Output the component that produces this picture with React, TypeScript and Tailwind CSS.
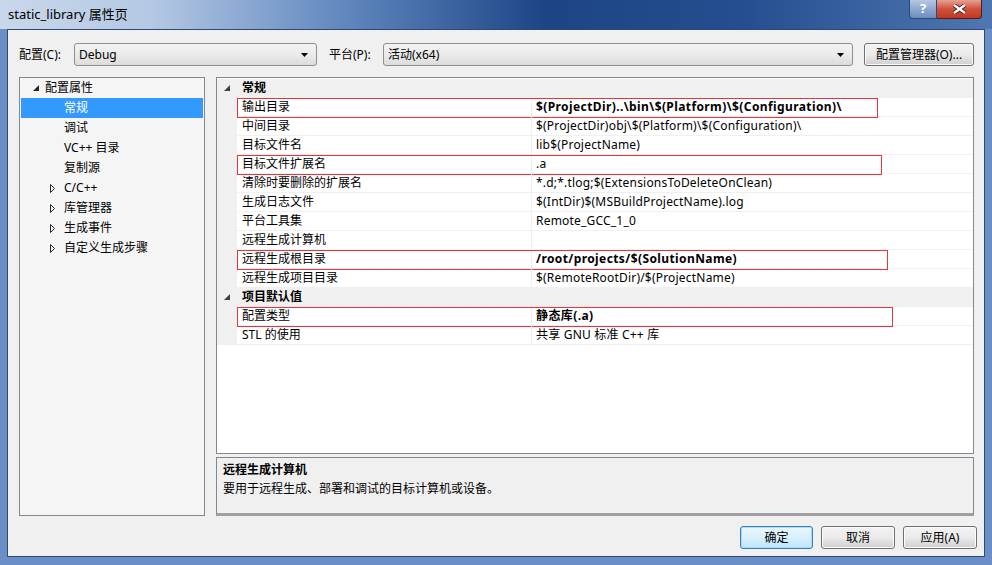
import React from "react";

const font = "font-['Noto_Sans','Noto_Sans_CJK_SC',sans-serif]";

type Row = { name: string; value: string; bold?: boolean; mark?: number };

const general: Row[] = [
  { name: "输出目录", value: "$(ProjectDir)..\\bin\\$(Platform)\\$(Configuration)\\", bold: true, mark: 641 },
  { name: "中间目录", value: "$(ProjectDir)obj\\$(Platform)\\$(Configuration)\\" },
  { name: "目标文件名", value: "lib$(ProjectName)" },
  { name: "目标文件扩展名", value: ".a", mark: 645 },
  { name: "清除时要删除的扩展名", value: "*.d;*.tlog;$(ExtensionsToDeleteOnClean)" },
  { name: "生成日志文件", value: "$(IntDir)$(MSBuildProjectName).log" },
  { name: "平台工具集", value: "Remote_GCC_1_0" },
  { name: "远程生成计算机", value: "" },
  { name: "远程生成根目录", value: "/root/projects/$(SolutionName)", bold: true, mark: 651 },
  { name: "远程生成项目目录", value: "$(RemoteRootDir)/$(ProjectName)" },
];

const defaults: Row[] = [
  { name: "配置类型", value: "静态库(.a)", bold: true, mark: 656 },
  { name: "STL 的使用", value: "共享 GNU 标准 C++ 库" },
];

const tree = ["调试", "VC++ 目录", "复制源"];
const collapsed = ["C/C++", "库管理器", "生成事件", "自定义生成步骤"];

function Combo({ text, width }: { text: string; width: string }) {
  return (
    <div
      className={`${width} h-[23px] flex items-center justify-between rounded-[3px] border border-[#8e8f8f] bg-gradient-to-b from-[#f2f2f2] via-[#ebebeb] to-[#dcdcdc] pl-[4px] pr-[8px]`}
    >
      <span className="text-[12px] text-black">{text}</span>
      <svg width="7" height="4" viewBox="0 0 7 4">
        <path d="M0 0h7L3.5 4z" fill="#000" />
      </svg>
    </div>
  );
}

function Button({ text, width, focus }: { text: string; width: string; focus?: boolean }) {
  return (
    <div
      className={`${width} h-[23px] flex items-center justify-center rounded-[3px] border ${
        focus
          ? "border-[#3c7fb1] shadow-[inset_0_0_0_1px_#a9dbf6] bg-gradient-to-b from-[#eaf6fd] via-[#d9f0fc] to-[#bee6fd]"
          : "border-[#707070] shadow-[inset_0_0_0_1px_#fcfcfc] bg-gradient-to-b from-[#f2f2f2] via-[#ebebeb] to-[#cfcfcf]"
      } text-[12px] text-black`}
    >
      {text}
    </div>
  );
}

function GridRow({ row }: { row: Row }) {
  return (
    <div className="relative flex h-[19px] border-b border-[#f0f0f0]">
      <div className="w-[20px] shrink-0 bg-[#f0f0f0]" />
      <div className="w-[295px] shrink-0 border-r border-[#f0f0f0] pl-[5px] leading-[18px]">{row.name}</div>
      <div
        className={`flex-1 pl-[4px] leading-[18px] whitespace-nowrap ${
          row.bold ? "font-bold tracking-[0.4px]" : "tracking-[0.2px]"
        }`}
      >
        {row.value}
      </div>
      {row.mark ? (
        <div
          className="absolute left-[20px] top-0 h-[20px] border border-[#e8343a]"
          style={{ width: row.mark }}
        />
      ) : null}
    </div>
  );
}

function Category({ label }: { label: string }) {
  return (
    <div className="flex h-[19px] items-center bg-[#f0f0f0] border-b border-[#f0f0f0]">
      <div className="w-[20px] flex justify-center">
        <svg width="6" height="6" viewBox="0 0 6 6">
          <path d="M6 0V6H0z" fill="#404040" />
        </svg>
      </div>
      <span className="pl-[5px] font-bold">{label}</span>
    </div>
  );
}

export default function App() {
  return (
    <div className={`${font} w-[992px] h-[565px] flex flex-col bg-[#6a8fc6] text-[12px] text-black overflow-hidden`}>
      {/* title bar */}
      <div className="h-[29px] shrink-0 flex items-start justify-between bg-[linear-gradient(90deg,#c9d7ea_0%,#b5c9e4_15%,#5f86bd_35%,#1d4585_55%,#244e8f_75%,#4f77b1_100%)]">
        <div className="pl-[8px] pt-[5px] text-[13px] text-black">static_library 属性页</div>
        <div className="flex mr-[10px]">
          <div className="w-[28px] h-[19px] flex items-center justify-center rounded-bl-[4px] border border-t-0 border-[#2c4a78] bg-gradient-to-b from-[#b7c9e3] via-[#8ea8cf] to-[#6d8cbd] text-white font-bold text-[13px]">
            ?
          </div>
          <div className="w-[45px] h-[19px] flex items-center justify-center rounded-br-[4px] border border-l-0 border-t-0 border-[#5a1a12] bg-gradient-to-b from-[#e6a094] via-[#cf4f3b] to-[#c1391e]">
            <svg width="13" height="10" viewBox="0 0 13 10">
              <path d="M1 1l11 8M12 1L1 9" stroke="#3a1a14" strokeWidth="4" />
              <path d="M1 1l11 8M12 1L1 9" stroke="#fff" strokeWidth="2.4" />
            </svg>
          </div>
        </div>
      </div>

      {/* client */}
      <div className="flex-1 mx-[7px] mb-[8px] border border-[#2b4a7a] bg-[#f0f0f0] flex flex-col pl-[11px] pr-[10px] pt-[13px]">
        <div className="flex items-center h-[23px]">
          <span className="w-[55px]">配置(C):</span>
          <Combo text="Debug" width="w-[243px]" />
          <span className="ml-[12px] w-[54px]">平台(P):</span>
          <Combo text="活动(x64)" width="w-[470px]" />
          <div className="ml-[11px]">
            <Button text="配置管理器(O)..." width="w-[110px]" />
          </div>
        </div>

        <div className="flex mt-[11px] gap-[11px] h-[439px]">
          {/* tree */}
          <div className="w-[186px] border border-[#828790] bg-[#f5f5f5] px-[1px]">
            <div className="flex items-center h-[20px]">
              <div className="w-[24px] flex justify-end pr-[6px]">
                <svg width="6" height="6" viewBox="0 0 6 6">
                  <path d="M6 0V6H0z" fill="#262626" />
                </svg>
              </div>
              <span>配置属性</span>
            </div>
            <div className="h-[20px] bg-[#3399ff] text-white pl-[43px] leading-[20px]">常规</div>
            {tree.map((t) => (
              <div key={t} className="h-[20px] pl-[43px] leading-[20px]">
                {t}
              </div>
            ))}
            {collapsed.map((c) => (
              <div key={c} className="flex items-center h-[20px]">
                <div className="w-[43px] flex justify-end pr-[9px]">
                  <svg width="5" height="9" viewBox="0 0 5 9">
                    <path d="M0.5 0.5L4.5 4.5L0.5 8.5z" fill="none" stroke="#262626" />
                  </svg>
                </div>
                <span>{c}</span>
              </div>
            ))}
          </div>

          {/* property grid */}
          <div className="flex-1 flex flex-col gap-[3px]">
            <div className="h-[377px] border border-[#828790] bg-white pt-[1px]">
              <Category label="常规" />
              {general.map((r) => (
                <GridRow key={r.name} row={r} />
              ))}
              <Category label="项目默认值" />
              {defaults.map((r) => (
                <GridRow key={r.name} row={r} />
              ))}
            </div>
            <div className="flex-1 border border-[#828790] border-b-[3px] border-b-[#a0a0a0] bg-[#f0f0f0] px-[6px] pt-[2px]">
              <div className="font-bold leading-[19px]">远程生成计算机</div>
              <div className="leading-[19px]">要用于远程生成、部署和调试的目标计算机或设备。</div>
            </div>
          </div>
        </div>

        <div className="flex justify-end mt-[10px] gap-[8px]">
          <Button text="确定" width="w-[73px]" focus />
          <Button text="取消" width="w-[74px]" />
          <div className="mr-[-3px]">
            <Button text="应用(A)" width="w-[74px]" />
          </div>
        </div>
      </div>
    </div>
  );
}
